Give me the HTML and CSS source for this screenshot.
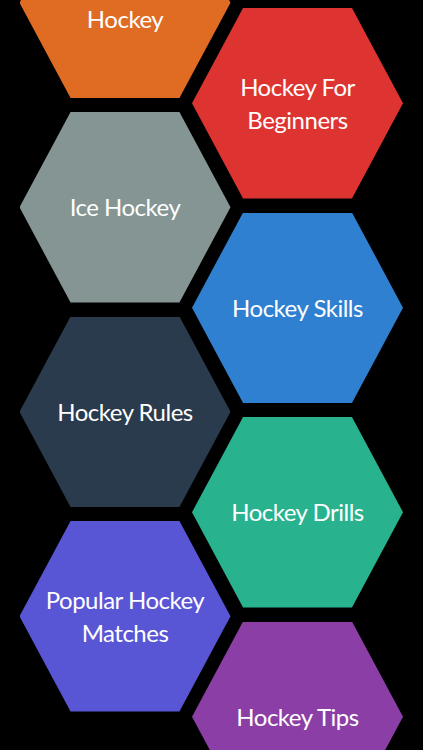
FILE: index.html
```html
<!DOCTYPE html>
<html lang="en">
<head>
<meta charset="utf-8">
<title>Hockey Guide</title>
<link rel="stylesheet" href="styles.css">
</head>
<body>
<main class="board">
  <div class="col col-left">
    <div class="hex hex-orange"><span class="label">Learn To Play Hockey</span></div>
    <div class="hex hex-gray"><span class="label">Ice Hockey</span></div>
    <div class="hex hex-navy"><span class="label">Hockey Rules</span></div>
    <div class="hex hex-violet"><span class="label">Popular Hockey Matches</span></div>
  </div>
  <div class="col col-right">
    <div class="hex hex-red"><span class="label">Hockey For Beginners</span></div>
    <div class="hex hex-blue"><span class="label">Hockey Skills</span></div>
    <div class="hex hex-green"><span class="label">Hockey Drills</span></div>
    <div class="hex hex-purple"><span class="label">Hockey Tips</span></div>
  </div>
</main>
</body>
</html>
```
FILE: styles.css
```css
html, body {
  margin: 0;
  padding: 0;
  background: #000;
}
body {
  width: 423px;
  height: 750px;
  overflow: hidden;
}
.board {
  display: flex;
  align-items: flex-start;
  height: 750px;
  overflow: hidden;
  padding-left: 19.5px;
  box-sizing: border-box;
}
.col {
  display: flex;
  flex-direction: column;
  gap: 14px;
  flex: none;
}
.col-left {
  margin-top: -92.5px;
}
.col-right {
  margin-top: 8px;
  margin-left: -38.5px;
}
.hex {
  width: 211px;
  height: 190.5px;
  flex: none;
  clip-path: polygon(24.2% 0, 75.8% 0, 100% 50%, 75.8% 100%, 24.2% 100%, 0 50%);
  display: flex;
  align-items: center;
  justify-content: center;
  box-sizing: border-box;
  padding-bottom: 1px;
}
.label {
  display: block;
  max-width: 165px;
  text-align: center;
  color: #fff;
  font-family: Lato, "Open Sans", sans-serif;
  font-size: 24px;
  line-height: 33px;
  letter-spacing: -0.5px;
}
.hex-orange { background: #e06b23; }
.hex-gray { background: #849593; }
.hex-navy { background: #2a3b4d; }
.hex-violet { background: #5956d6; }
.hex-red { background: #de3431; }
.hex-blue { background: #2f80d1; }
.hex-green { background: #29b28e; }
.hex-purple { background: #8b3fa6; }
```
